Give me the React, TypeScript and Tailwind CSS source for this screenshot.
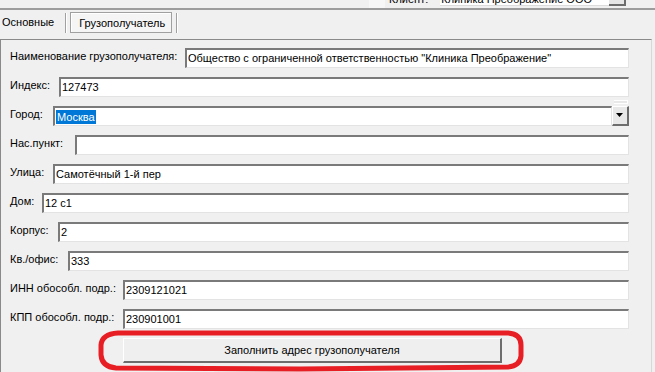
import React from 'react'

const rows: { label: string; w: string; value: string }[] = [
  { label: 'Наименование грузополучателя:', w: 'w-[175px]', value: 'Общество с ограниченной ответственностью "Клиника Преображение"' },
  { label: 'Индекс:', w: 'w-[49px]', value: '127473' },
]

const rows2: { label: string; w: string; value: string }[] = [
  { label: 'Нас.пункт:', w: 'w-[65px]', value: '' },
  { label: 'Улица:', w: 'w-[43px]', value: 'Самотёчный 1-й пер' },
  { label: 'Дом:', w: 'w-[32px]', value: '12 с1' },
  { label: 'Корпус:', w: 'w-[48px]', value: '2' },
  { label: 'Кв./офис:', w: 'w-[58px]', value: '333' },
  { label: 'ИНН обособл. подр.:', w: 'w-[113px]', value: '2309121021' },
  { label: 'КПП обособл. подр.:', w: 'w-[113px]', value: '230901001' },
]

const sunken =
  'h-[20px] bg-white border-t-2 border-l-2 border-t-[#7a7a7a] border-l-[#7a7a7a] border-b border-r border-b-[#e3e3e3] border-r-[#e3e3e3]'

function Row({ label, w, value }: { label: string; w: string; value: string }) {
  return (
    <div className="flex items-center h-[20px]">
      <span className={`${w} shrink-0 pb-[4px] whitespace-nowrap`}>{label}</span>
      <div className={`flex-1 ${sunken} flex items-center pl-[1px] whitespace-nowrap overflow-hidden`}>{value}</div>
    </div>
  )
}

export default function App() {
  return (
    <div
      className="relative w-[655px] h-[372px] overflow-hidden bg-[#f0f0f0] text-[11px] text-black"
      style={{ fontFamily: '"Liberation Sans", Arial, sans-serif' }}
    >
      {/* cut-off strip above */}
      <div className="h-[8px] overflow-hidden">
        <div className="flex items-end h-[8px] pl-[369px]">
          <div className="w-[16px] h-[8px] bg-[#f7f7f7]" />
          <span className="ml-[4px] mb-[3px] leading-none whitespace-nowrap">Клиент:</span>
          <div className="ml-[12px] mb-[2px] w-[169px] h-[6px] bg-white border-b border-[#dcdcdc] overflow-hidden flex items-end">
            <span className="pl-[1px] leading-none whitespace-nowrap">Клиника Преображение ООО</span>
          </div>
          <div className="mb-[2px] w-[17px] h-[6px] bg-[#e6e6e6] border-r-2 border-b-2 border-[#6d6d6d]" />
        </div>
      </div>
      <div className="h-[2px] bg-[#9c9c9c]" />

      {/* tabs */}
      <div className="h-[29px] flex items-center">
        <span className="ml-[2px] mt-[-4px]">Основные</span>
        <div className="ml-[11px] w-[2px] h-[20px] border-l border-[#a0a0a0] border-r border-r-white mt-[-4px]" />
        <div className="ml-[3px] w-[102px] h-[21px] mt-[-4px] border border-[#a0a0a0] flex items-center">
          <div className="w-full h-full border-l border-t border-white bg-[#f5f5f5] flex items-center pl-[7px]">Грузополучатель</div>
        </div>
        <div className="ml-[4px] w-[2px] h-[20px] border-l border-[#a0a0a0] border-r border-r-white mt-[-4px]" />
      </div>

      {/* panel */}
      <div className="w-[652px] h-[340px] border-t border-l border-[#8a8a8a] border-r border-r-[#d8d8d8] pt-[8px] pl-[9px] pr-[22px]">
        <div className="flex flex-col gap-[9px]">
          {rows.map(r => (
            <Row key={r.label} {...r} />
          ))}
          <div className="flex items-center h-[20px] relative">
            <span className="w-[43px] shrink-0 pb-[4px]">Город:</span>
            <div className={`flex-1 ${sunken} flex items-center pl-[1px]`}>
              <span className="bg-[#0078d7] text-white px-[1px] leading-[14px]">Москва</span>
            </div>
            <div className="w-[17px] h-[20px] bg-[#e8e8e8] border-t border-l border-white border-r-2 border-b-2 border-r-[#6d6d6d] border-b-[#6d6d6d] flex items-center justify-center">
              <svg width="8" height="5" viewBox="0 0 8 5">
                <path d="M0 0 H7 L3.5 4 Z" fill="#000" />
              </svg>
            </div>
            <div className="absolute right-[1px] -top-[6px] w-[14px] h-[4px] bg-[#e8e8e8] border-t border-white border-r border-b border-[#7a7a7a]" />
          </div>
          {rows2.map(r => (
            <Row key={r.label} {...r} />
          ))}
          <div className="flex">
            <div className="ml-[113px] w-[379px] h-[25px] bg-[#efefef] border-t border-l border-white border-r-2 border-b-2 border-r-[#6d6d6d] border-b-[#6d6d6d] flex items-center justify-center">
              Заполнить адрес грузополучателя
            </div>
          </div>
        </div>
      </div>

      {/* red annotation */}
      <svg className="absolute left-0 top-0 pointer-events-none" width="655" height="372">
        <path
          d="M118 333 L508 333 Q521 334 521 345 L521 356 Q520 366 508 367 L300 369 L116 368 Q102 367 101 355 L101 345 Q102 334 118 333 Z"
          fill="none"
          stroke="#e81e25"
          strokeWidth="5"
        />
      </svg>
    </div>
  )
}
